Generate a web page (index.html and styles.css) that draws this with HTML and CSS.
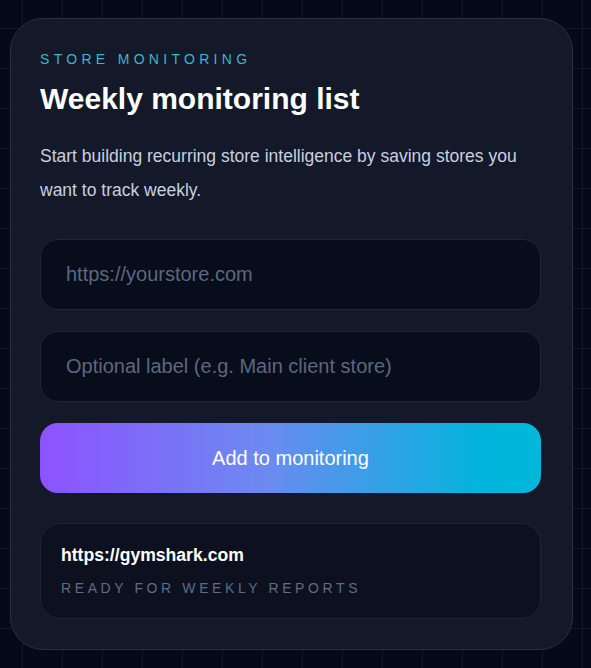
FILE: index.html
```html
<!DOCTYPE html>
<html lang="en">
<head>
<meta charset="utf-8">
<title>Weekly monitoring list</title>
<link rel="stylesheet" href="styles.css">
</head>
<body>
<section class="card">
  <p class="eyebrow">STORE MONITORING</p>
  <h1 class="title">Weekly monitoring list</h1>
  <p class="lead">Start building recurring store intelligence by saving stores you want to track weekly.</p>
  <form class="form">
    <input class="field" type="text" placeholder="https://yourstore.com">
    <input class="field" type="text" placeholder="Optional label (e.g. Main client store)">
    <button class="btn" type="button">Add to monitoring</button>
  </form>
  <div class="store">
    <div class="store-url">https://gymshark.com</div>
    <div class="store-status">READY FOR WEEKLY REPORTS</div>
  </div>
</section>
</body>
</html>
```
FILE: styles.css
```css
html, body {
  margin: 0;
  padding: 0;
}
body {
  width: 591px;
  height: 668px;
  overflow: hidden;
  background-color: #050a18;
  background-image:
    linear-gradient(to right, #111829 1px, transparent 1px),
    linear-gradient(to bottom, #111829 1px, transparent 1px);
  background-size: 40px 40px;
  background-position: 22px 28px;
  font-family: "Liberation Sans", Arial, sans-serif;
}
.card {
  box-sizing: border-box;
  width: 563px;
  height: 632px;
  margin: 18px 0 0 10px;
  padding: 32px 31px 31px 29px;
  background: #131928;
  border: 1px solid #2a3041;
  border-radius: 33px;
}
.eyebrow {
  margin: 0;
  font-size: 14px;
  line-height: 16px;
  letter-spacing: 4.3px;
  color: #3db5cb;
}
.title {
  margin: 14px 0 0;
  font-size: 30px;
  line-height: 36px;
  font-weight: 700;
  color: #ffffff;
}
.lead {
  margin: 22px 0 0;
  font-size: 17.5px;
  line-height: 34px;
  color: #c8d0e0;
}
.form {
  margin-top: 32px;
  display: flex;
  flex-direction: column;
  gap: 21px;
}
.field {
  box-sizing: border-box;
  width: 100%;
  height: 71px;
  padding: 0 25px;
  background: #080d1b;
  border: 1px solid #1f2638;
  border-radius: 18px;
  font-family: "Liberation Sans", Arial, sans-serif;
  font-size: 20px;
  color: #e6ebf5;
  outline: none;
}
.field::placeholder {
  color: #5b6880;
}
.btn {
  box-sizing: border-box;
  width: 100%;
  height: 70px;
  border: 0;
  border-radius: 18px;
  background: linear-gradient(90deg, #8d52ff 0%, #6c8af0 45%, #00b5dc 89%, #00b8da 100%);
  font-family: "Liberation Sans", Arial, sans-serif;
  font-size: 20px;
  color: #ffffff;
  cursor: pointer;
}
.store {
  box-sizing: border-box;
  margin-top: 30px;
  height: 96px;
  padding: 21px 20px;
  background: #0d111f;
  border: 1px solid #1e2436;
  border-radius: 20px;
}
.store-url {
  font-size: 17.6px;
  line-height: 20px;
  font-weight: 700;
  color: #ffffff;
}
.store-status {
  margin-top: 15px;
  font-size: 14px;
  line-height: 16px;
  letter-spacing: 3.6px;
  color: #5f6b86;
}
```
